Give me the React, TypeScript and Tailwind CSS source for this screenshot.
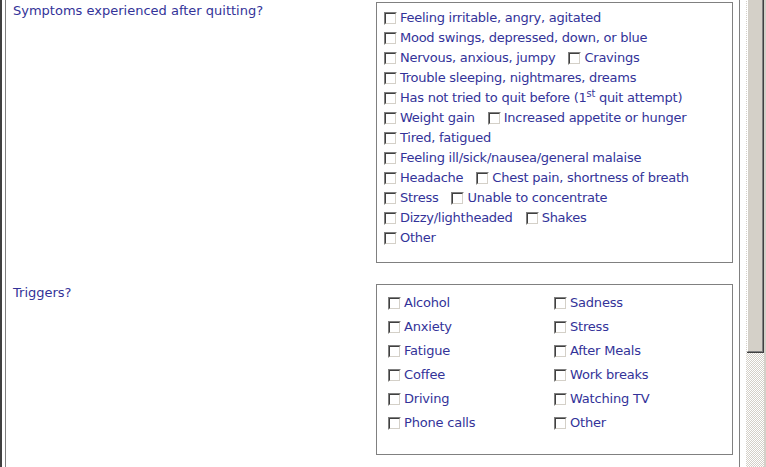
import type { ReactNode } from 'react';

const font = { fontFamily: '"DejaVu Sans", Verdana, sans-serif' };

function Check() {
  return (
    <span className="inline-block w-[13px] h-[13px] shrink-0 border border-t-[#808080] border-l-[#808080] border-b-white border-r-white">
      <span className="block w-full h-full border border-t-[#404040] border-l-[#404040] border-b-[#d4d0c8] border-r-[#d4d0c8] bg-white" />
    </span>
  );
}

function Opt({ children }: { children: ReactNode }) {
  return (
    <span className="flex items-center gap-[3px] whitespace-nowrap">
      <Check />
      <span>{children}</span>
    </span>
  );
}

const symptoms: ReactNode[][] = [
  ['Feeling irritable, angry, agitated'],
  ['Mood swings, depressed, down, or blue'],
  ['Nervous, anxious, jumpy', 'Cravings'],
  ['Trouble sleeping, nightmares, dreams'],
  [<>Has not tried to quit before (1<sup>st</sup> quit attempt)</>],
  ['Weight gain', 'Increased appetite or hunger'],
  ['Tired, fatigued'],
  ['Feeling ill/sick/nausea/general malaise'],
  ['Headache', 'Chest pain, shortness of breath'],
  ['Stress', 'Unable to concentrate'],
  ['Dizzy/lightheaded', 'Shakes'],
  ['Other'],
];

const triggers = [
  'Alcohol', 'Sadness',
  'Anxiety', 'Stress',
  'Fatigue', 'After Meals',
  'Coffee', 'Work breaks',
  'Driving', 'Watching TV',
  'Phone calls', 'Other',
];

export default function App() {
  return (
    <div className="flex h-[467px] w-[766px] overflow-hidden bg-white text-[13px] text-[#333399]" style={font}>
      {/* frame edge */}
      <div className="w-[2px] bg-[#404040]" />
      <div className="w-[3px]" />
      <div className="w-px bg-[#808080]" />

      {/* form */}
      <main className="flex w-[733px] flex-col pt-[2px]">
        <section className="flex">
          <div className="w-[370px] pl-[7px] pt-px leading-4">Symptoms experienced after quitting?</div>
          <div className="h-[261px] w-[357px] border border-[#808080] px-[7px] pt-[5px] tracking-[-0.25px]">
            {symptoms.map((row, i) => (
              <div key={i} className="flex h-5 items-center gap-[13px] leading-5">
                {row.map((label, j) => (
                  <Opt key={j}>{label}</Opt>
                ))}
              </div>
            ))}
          </div>
        </section>

        <section className="mt-[21px] flex">
          <div className="w-[370px] pl-[7px] pt-px leading-4">Triggers?</div>
          <div className="h-[171px] w-[357px] border border-[#808080] pl-[11px] pt-[8px] tracking-[-0.2px]">
            <div className="grid grid-cols-[166px_1fr] gap-y-1">
              {triggers.map((t) => (
                <div key={t} className="flex h-5 items-center leading-5">
                  <Opt>{t}</Opt>
                </div>
              ))}
            </div>
          </div>
        </section>
      </main>

      <div className="w-px bg-[#808080]" />
      <div className="w-[6px]" />

      {/* scrollbar */}
      <div className="flex w-[20px] bg-[repeating-conic-gradient(#d4d0c8_0_25%,#ffffff_0_50%)] bg-[length:2px_2px]">
        <div className="w-[18px]">
          <div className="ml-px h-[353px] w-[17px] border-r border-b border-[#404040] bg-[#d4d0c8]">
            <div className="h-full w-full border-l border-[#ffffff] border-r border-b border-r-[#808080] border-b-[#808080]" />
          </div>
        </div>
        <div className="w-[2px] bg-[#d4d0c8]" />
      </div>
    </div>
  );
}
